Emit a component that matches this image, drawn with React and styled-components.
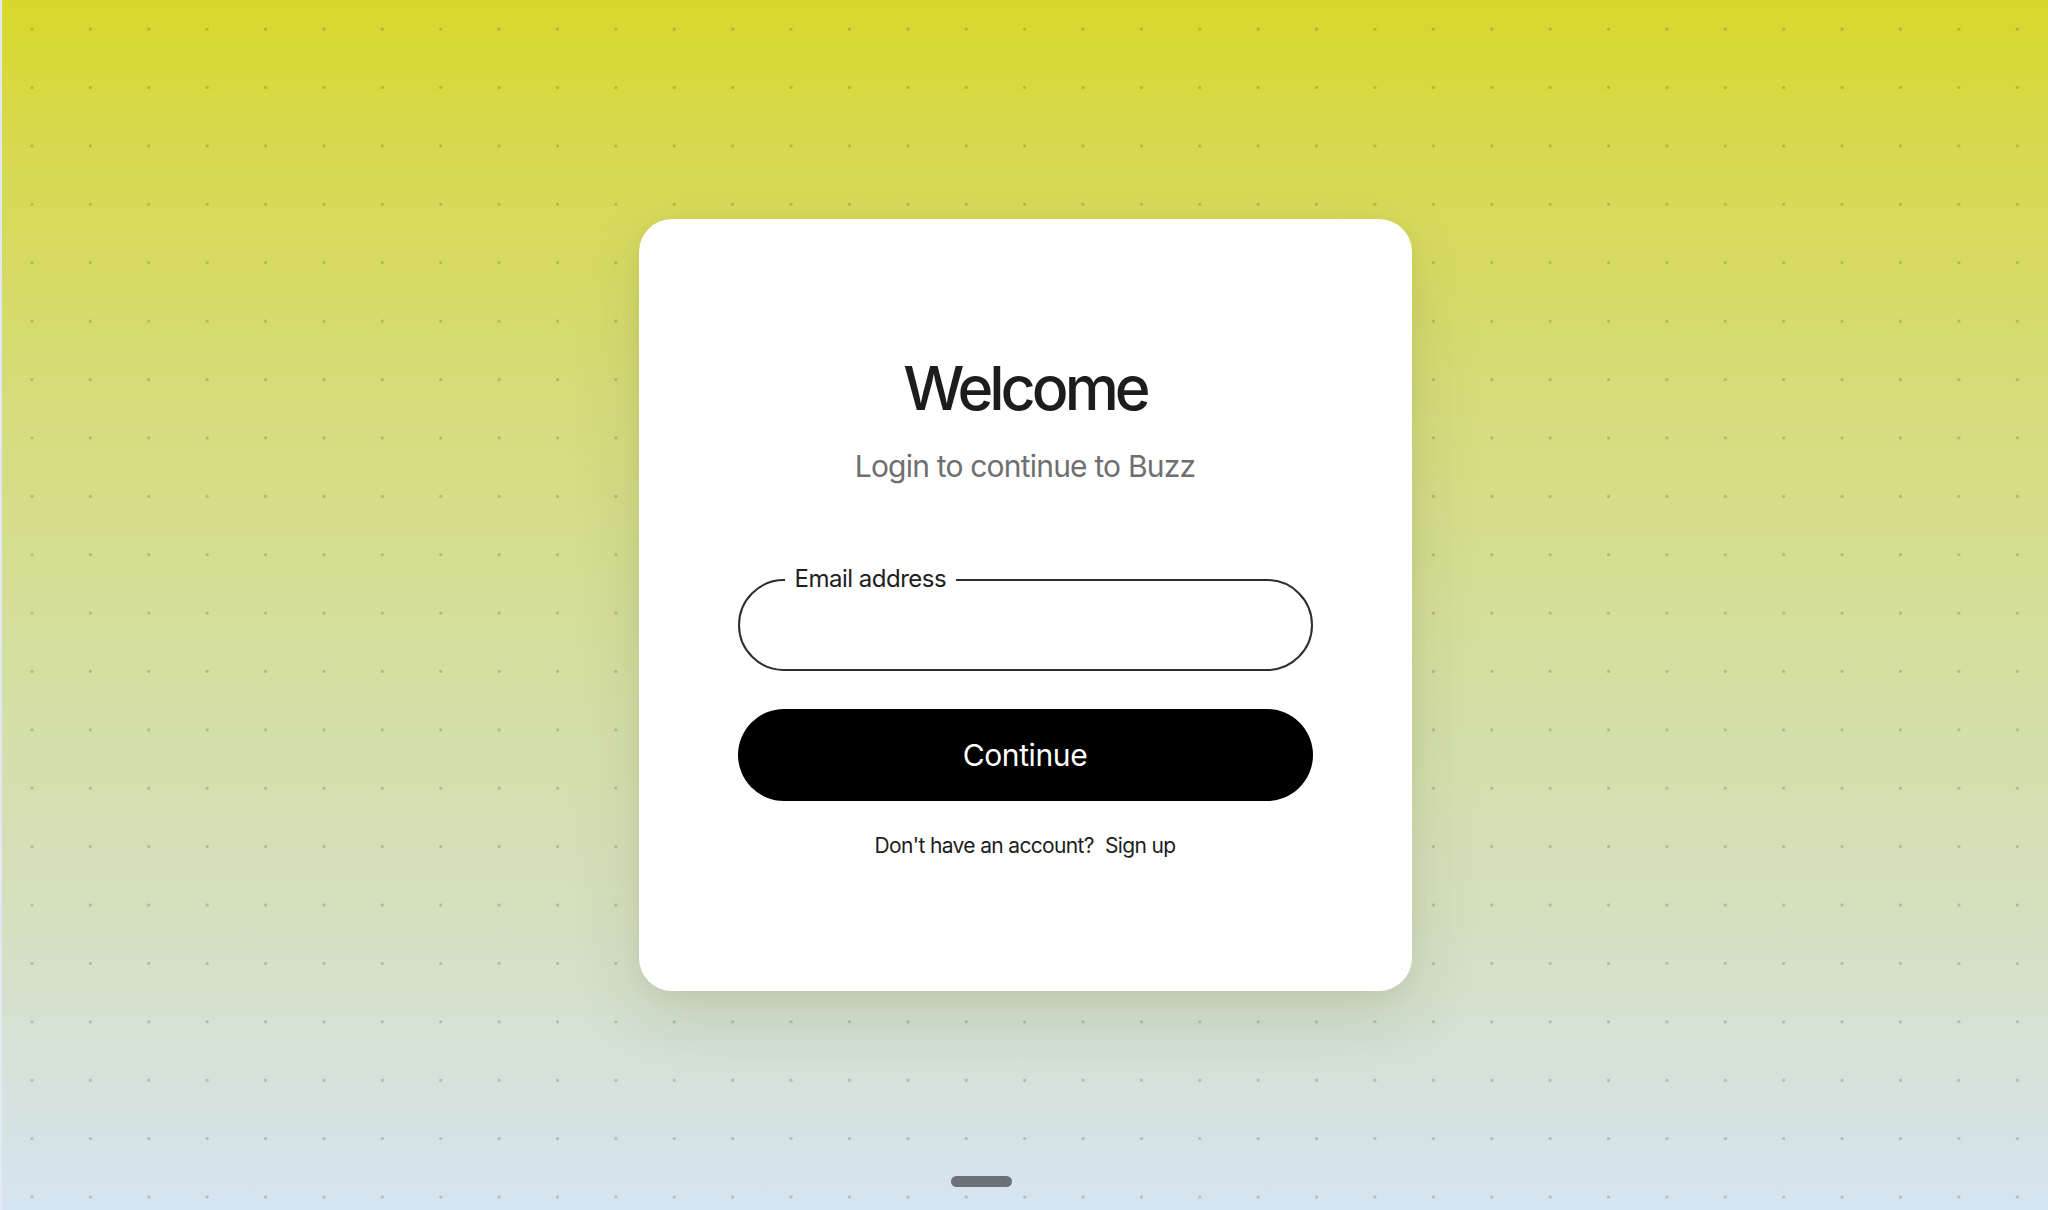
import styled, { createGlobalStyle } from "styled-components";

const GlobalStyle = createGlobalStyle`
  html, body {
    margin: 0;
    padding: 0;
  }
  body {
    font-family: Inter, "Noto Sans", "Liberation Sans", sans-serif;
    color: #1c1c1c;
  }
  * {
    box-sizing: border-box;
  }
`;

const Page = styled.div`
  position: relative;
  width: 2048px;
  height: 1210px;
  overflow: hidden;
  display: flex;
  align-items: center;
  justify-content: center;
  border-left: 2px solid #e2e8f4;
  background:
    radial-gradient(circle, rgba(70, 80, 60, 0.28) 1.1px, transparent 1.8px)
      0.8px 0 / 58.4px 58.4px,
    linear-gradient(
      180deg,
      #d9d82b 0%,
      #d7d94c 11%,
      #d6dc78 32%,
      #d5df9f 54%,
      #d5e0c0 76%,
      #d6e4f2 100%
    );
`;

const Card = styled.main`
  width: 773px;
  height: 772px;
  background: #fff;
  border-radius: 33px;
  box-shadow: 0 28px 70px rgba(70, 80, 40, 0.14), 0 6px 20px rgba(70, 80, 40, 0.05);
  display: flex;
  flex-direction: column;
  align-items: center;
  padding-top: 132px;
`;

const Title = styled.h1`
  margin: 0;
  font-size: 61px;
  line-height: 74px;
  font-weight: 500;
  letter-spacing: -4px;
  color: #1d1d1d;
`;

const Subtitle = styled.p`
  margin: 23px 0 0;
  font-size: 30px;
  line-height: 36px;
  font-weight: 400;
  letter-spacing: -0.8px;
  color: #6f6f6f;
`;

const Form = styled.form`
  width: 575px;
  margin-top: 95px;
  display: flex;
  flex-direction: column;
`;

const Field = styled.div`
  position: relative;
  height: 92px;
`;

const Input = styled.input`
  width: 100%;
  height: 100%;
  border: 2px solid #2e2e2e;
  border-radius: 46px;
  padding: 0 40px;
  font-family: inherit;
  font-size: 26px;
  background: #fff;
  outline: none;
`;

const Label = styled.label`
  position: absolute;
  top: -14px;
  left: 47px;
  padding: 0 10px;
  background: #fff;
  font-size: 24px;
  line-height: 28px;
  letter-spacing: -0.5px;
  color: #202020;
`;

const Button = styled.button`
  margin-top: 38px;
  height: 92px;
  border: none;
  border-radius: 46px;
  background: #000;
  color: #fff;
  font-family: inherit;
  font-size: 30px;
  font-weight: 400;
  letter-spacing: -0.4px;
  cursor: pointer;
`;

const Footer = styled.p`
  margin: 32px 0 0;
  text-align: center;
  font-size: 21px;
  line-height: 26px;
  letter-spacing: -0.65px;
  color: #1d1d1d;
`;

const SignUp = styled.a`
  margin-left: 11px;
  color: #1d1d1d;
  text-decoration: none;
  cursor: pointer;
`;

const HomeBar = styled.div`
  position: absolute;
  left: 949px;
  bottom: 23px;
  width: 61px;
  height: 11px;
  border-radius: 6px;
  background: #6c7177;
`;

export default function App() {
  return (
    <>
      <GlobalStyle />
      <Page>
        <Card>
          <Title>Welcome</Title>
          <Subtitle>Login to continue to Buzz</Subtitle>
          <Form onSubmit={(e) => e.preventDefault()}>
            <Field>
              <Input id="email" type="email" />
              <Label htmlFor="email">Email address</Label>
            </Field>
            <Button type="submit">Continue</Button>
            <Footer>
              Don't have an account?
              <SignUp>Sign up</SignUp>
            </Footer>
          </Form>
        </Card>
        <HomeBar />
      </Page>
    </>
  );
}
